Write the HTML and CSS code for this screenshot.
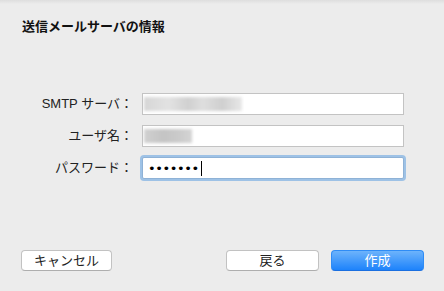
FILE: index.html
```html
<!DOCTYPE html>
<html lang="ja">
<head>
    <meta charset="UTF-8">
    <meta name="viewport" content="width=device-width, initial-scale=1.0">
    <title>送信メールサーバの情報</title>
    <link rel="stylesheet" href="styles.css">
</head>
<body>

    <div class="sheet">
        <h2 class="title">送信メールサーバの情報</h2>

        <div class="form">
            <label class="label">SMTP サーバ：</label>
            <div class="field">
                <span class="blur blur-host"></span>
            </div>

            <label class="label">ユーザ名：</label>
            <div class="field">
                <span class="blur blur-user"></span>
            </div>

            <label class="label">パスワード：</label>
            <div class="field field-focus">
                <span class="dots">•••••••</span><span class="caret"></span>
            </div>
        </div>

        <div class="buttons">
            <button class="btn">キャンセル</button>
            <div class="spacer"></div>
            <button class="btn">戻る</button>
            <button class="btn btn-default">作成</button>
        </div>
    </div>

</body>
</html>
```

FILE: styles.css
```css
html, body {
    margin: 0;
    padding: 0;
}

body {
    font-family: "Liberation Sans", "Noto Sans CJK JP", sans-serif;
    background: linear-gradient(#dedede 0, #ececec 4px) #ececec;
    color: #222;
}

.sheet {
    height: 291px;
    display: flex;
    flex-direction: column;
}

.title {
    margin: 0;
    padding: 19px 0 0 22px;
    font-size: 13px;
    line-height: 16px;
    font-weight: bold;
    color: #111;
}

.form {
    margin-top: 58px;
    display: grid;
    grid-template-columns: 125px 262px;
    column-gap: 9px;
    row-gap: 10px;
    padding-left: 8px;
}

.label {
    font-size: 13px;
    line-height: 22px;
    text-align: right;
    color: #222;
}

.field {
    height: 22px;
    box-sizing: border-box;
    background: white;
    border: 1px solid #c3c3c3;
    display: flex;
    align-items: center;
    padding-left: 1px;
    overflow: hidden;
}

.field-focus {
    border-color: #8fb2d6;
    box-shadow: 0 0 0 2px #9ec2e6;
    border-radius: 2px;
    padding-left: 5px;
}

.blur {
    display: inline-block;
    height: 14px;
    filter: blur(1.5px);
}

.blur-host {
    width: 98px;
    background: linear-gradient(90deg, #d6d6d6 0, #e2e2e2 25%, #d0d0d0 45%, #dedede 60%, #cfcfcf 80%, #e8e8e8 100%);
}

.blur-user {
    width: 48px;
    background: linear-gradient(90deg, #d0d0d0 0, #c4c4c4 40%, #cacaca 70%, #d4d4d4 100%);
}

.dots {
    font-family: "DejaVu Sans", sans-serif;
    font-size: 13px;
    letter-spacing: -0.4px;
    color: #000;
}

.caret {
    display: inline-block;
    width: 1px;
    height: 15px;
    background: #000;
    margin-left: 2px;
}

.buttons {
    margin-top: auto;
    display: flex;
    gap: 12px;
    padding: 0 20px 20px 21px;
}

.spacer {
    flex: 1;
}

.btn {
    width: 93px;
    height: 21px;
    padding: 0;
    font-family: "Liberation Sans", "Noto Sans CJK JP", sans-serif;
    font-size: 13px;
    line-height: 19px;
    color: #222;
    background: white;
    border: 1px solid #c2c2c2;
    border-bottom-color: #aeaeae;
    border-radius: 4px;
}

.btn:first-child {
    width: 91px;
}

.btn-default {
    color: white;
    background: linear-gradient(#6db3fb, #1d83fb);
    border-color: #2f8cf5;
    border-bottom-color: #1a6fe0;
}
```
